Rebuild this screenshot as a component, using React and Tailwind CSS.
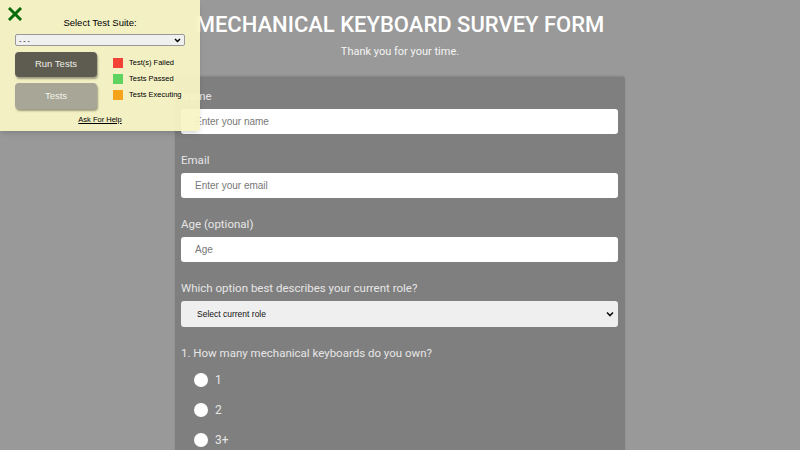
import React from 'react';

const legend = [
  { text: 'Test(s) Failed', color: 'bg-[#f44336]' },
  { text: 'Tests Passed', color: 'bg-[#5fd35f]' },
  { text: 'Tests Executing', color: 'bg-[#f5a31a]' },
];

const TestPanel = () => (
  <div className="absolute left-0 top-0 z-10 w-[200px] h-[131px] bg-[#f8f6c6]/95 rounded-br shadow-md font-['Liberation_Sans',Arial,sans-serif]">
    <svg className="absolute left-[8px] top-[7px]" width="14" height="14" viewBox="0 0 14 14">
      <path d="M2 2 L12 12 M12 2 L2 12" stroke="#0a6b0a" strokeWidth="3" strokeLinecap="square" />
    </svg>
    <div className="pt-[17px] text-center text-[9.5px] text-black leading-[12px]">Select Test Suite:</div>
    <div className="mx-[15px] mt-[5px] h-[12px] bg-[#f0f0f0] border border-[#999] rounded-[2px] flex items-center justify-between px-[3px]">
      <span className="text-[7px] leading-none text-black">- - -</span>
      <svg width="7" height="5" viewBox="0 0 7 5">
        <path d="M1 1 L3.5 3.5 L6 1" stroke="#000" strokeWidth="1.5" fill="none" />
      </svg>
    </div>
    <div className="flex mt-[6px] pl-[15px]">
      <div className="flex flex-col gap-[6px]">
        <button className="w-[82px] h-[25px] rounded-[4px] bg-[#5e5c50] text-[#eeeee6] text-[9.5px] shadow-[1px_2px_2px_rgba(0,0,0,0.35)]">
          Run Tests
        </button>
        <button className="w-[82px] h-[26px] rounded-[4px] bg-[#a7a697] text-[#f2f2ea] text-[9.5px] shadow-[1px_2px_2px_rgba(0,0,0,0.35)]">
          Tests
        </button>
      </div>
      <div className="ml-[16px] mt-[6px] flex flex-col gap-[6px]">
        {legend.map((l) => (
          <div key={l.text} className="flex items-center gap-[6px] h-[10px]">
            <span className={`w-[10px] h-[10px] ${l.color}`}></span>
            <span className="text-[7.5px] leading-none text-black">{l.text}</span>
          </div>
        ))}
      </div>
    </div>
    <div className="mt-[5px] text-center text-[7.5px] leading-[12px] underline text-black">Ask For Help</div>
  </div>
);

const Field = ({ label, placeholder }) => (
  <div className="mb-[16px]">
    <label className="block text-[11.5px] leading-[20px] text-[#e6e6e6] mb-[3px]">{label}</label>
    <div className="h-[25px] bg-white rounded-[3px] flex items-center pl-[14px]">
      <span className="text-[10px] text-[#777] font-['Liberation_Sans',Arial,sans-serif]">{placeholder}</span>
    </div>
  </div>
);

export default function App() {
  return (
    <div className="relative w-[800px] h-[450px] overflow-hidden bg-[#999999] font-['Roboto',sans-serif]">
      <TestPanel />
      <header className="text-center pt-[9px]">
        <h1 className="text-[22px] leading-[32px] font-medium text-white">MECHANICAL KEYBOARD SURVEY FORM</h1>
        <p className="mt-[3px] text-[11px] leading-[16px] text-[#f4f4f4]">Thank you for your time.</p>
      </header>
      <main className="mx-auto mt-[17px] w-[450px] bg-[#7f7f7f] rounded-t-[3px] shadow-[0_-1px_2px_rgba(0,0,0,0.15)] pt-[9px] pl-[6px] pr-[7px]">
        <Field label="Name" placeholder="Enter your name" />
        <Field label="Email" placeholder="Enter your email" />
        <Field label="Age (optional)" placeholder="Age" />
        <div className="mb-[18px]">
          <label className="block text-[11.5px] leading-[20px] text-[#e6e6e6] mb-[3px]">Which option best describes your current role?</label>
          <div className="h-[26px] bg-[#efefef] rounded-[3px] flex items-center justify-between pl-[16px] pr-[4px] font-['Liberation_Sans',Arial,sans-serif]">
            <span className="text-[8.5px] text-[#111]">Select current role</span>
            <svg width="8" height="6" viewBox="0 0 8 6">
              <path d="M1 1.5 L4 4.5 L7 1.5" stroke="#111" strokeWidth="1.6" fill="none" />
            </svg>
          </div>
        </div>
        <p className="text-[11.5px] leading-[16px] text-[#e6e6e6]">1. How many mechanical keyboards do you own?</p>
        <div className="mt-[12px] pl-[13px] flex flex-col gap-[16px]">
          {['1', '2', '3+'].map((o) => (
            <div key={o} className="flex items-center gap-[7px] h-[14px]">
              <span className="w-[14px] h-[14px] rounded-full bg-white"></span>
              <span className="text-[12px] text-[#e6e6e6]">{o}</span>
            </div>
          ))}
        </div>
        <div className="h-[40px]"></div>
      </main>
    </div>
  );
}
